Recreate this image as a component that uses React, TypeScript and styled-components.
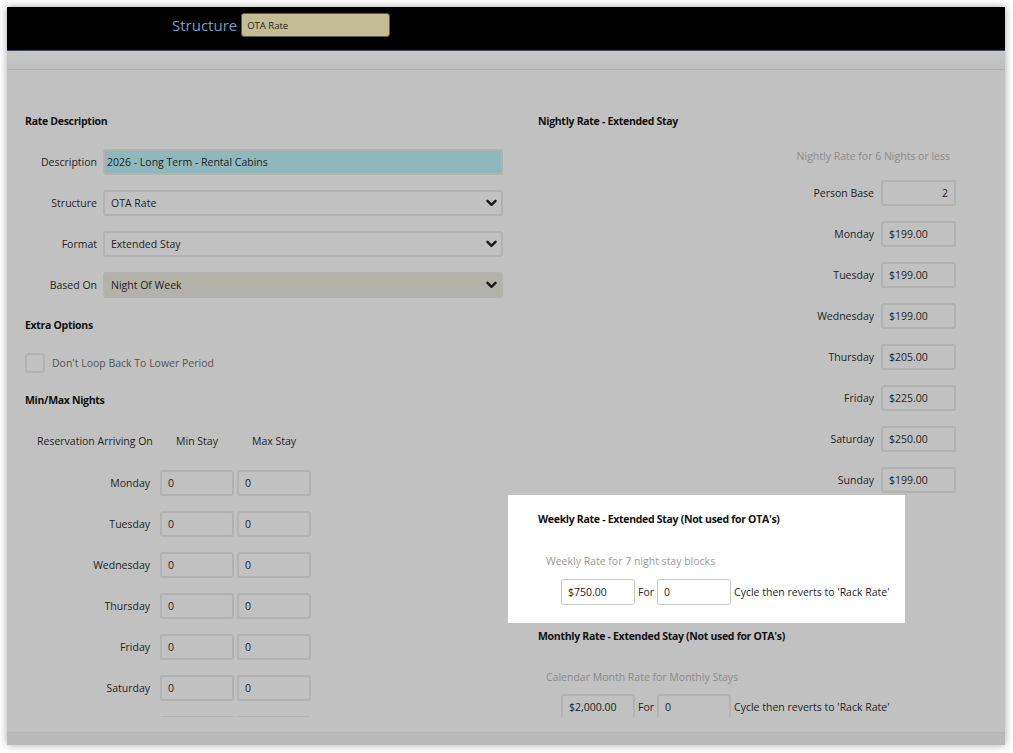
import React from 'react';
import styled, {createGlobalStyle} from 'styled-components';

const GlobalStyle = createGlobalStyle`
    html, body {
        margin: 0;
        padding: 0;
        background: #fff;
    }
    body {
        font-family: 'Open Sans', 'Liberation Sans', sans-serif;
        font-size: 10.5px;
        color: #1f1f1f;
    }
`;

const Page = styled.div`
    padding: 7px 8px 8px 7px;
`;

const Frame = styled.div`
    width: 998px;
    height: 738px;
    display: flex;
    flex-direction: column;
    background: #c1c1c1;
    box-shadow: 0 0 8px rgba(0, 0, 0, 0.35);
    overflow: hidden;
`;

const Header = styled.header`
    height: 44px;
    flex: none;
    box-sizing: border-box;
    display: flex;
    align-items: center;
    gap: 4px;
    padding: 0 0 7px 165px;
    background: #000;
    border-bottom: 1px solid #3c4d60;
`;

const HeaderLabel = styled.span`
    font-size: 15px;
    color: #7b9bc2;
`;

const HeaderInput = styled.div`
    width: 149px;
    height: 24px;
    box-sizing: border-box;
    display: flex;
    align-items: center;
    padding-left: 5px;
    font-size: 9.5px;
    color: #222;
    background: #c4bc92;
    border: 1px solid #5d5a45;
    border-radius: 3px;
`;

const SubBar = styled.div`
    height: 18px;
    flex: none;
    background: linear-gradient(#c6c6c6, #bfbfbf);
    border-bottom: 1px solid #b2b2b2;
`;

const Scroller = styled.div`
    flex: 1;
    overflow: hidden;
    margin-bottom: 15px;
`;

const Footer = styled.div`
    height: 12px;
    flex: none;
    background: #b9b9b9;
    border-top: 1px solid #b4b4b4;
`;

const Body = styled.div`
    display: grid;
    grid-template-columns: 478px 418px;
    column-gap: 35px;
    align-items: start;
    padding: 44px 0 0 18px;
`;

const Column = styled.div`
    display: flex;
    flex-direction: column;
`;

const SectionTitle = styled.div<{$top?: number}>`
    font-weight: 700;
    line-height: 14px;
    margin-top: ${p => p.$top ?? 0}px;
    color: #111;
    letter-spacing: -0.3px;
`;

const FieldList = styled.div<{$top?: number}>`
    display: flex;
    flex-direction: column;
    gap: 15px;
    margin-top: ${p => p.$top ?? 0}px;
`;

const FieldRow = styled.div`
    display: grid;
    grid-template-columns: 72px 1fr;
    column-gap: 6px;
    align-items: center;
`;

const Label = styled.span`
    text-align: right;
    white-space: nowrap;
`;

const Box = styled.div<{$bg?: string; $pad?: number}>`
    height: 26px;
    box-sizing: border-box;
    display: flex;
    align-items: center;
    justify-content: space-between;
    padding: 0 4px 0 ${p => p.$pad ?? 6}px;
    background: ${p => p.$bg ?? 'transparent'};
    border: 2px solid #b2b2b2;
    border-radius: 3px;
`;

const Chevron = () => (
    <svg width="11" height="8" viewBox="0 0 11 8">
        <path d="M1.5 1.8 L5.5 5.8 L9.5 1.8" fill="none" stroke="#1a1a1a" strokeWidth="2.4" strokeLinecap="round" strokeLinejoin="round" />
    </svg>
);

const CheckRow = styled.div`
    display: flex;
    align-items: center;
    gap: 7px;
    margin-top: 21px;
    color: #555;
`;

const CheckBox = styled.div`
    width: 20px;
    height: 20px;
    box-sizing: border-box;
    border: 2px solid #b2b2b2;
    border-radius: 3px;
`;

const DayGrid = styled.div`
    display: grid;
    grid-template-columns: 120px 74px 74px;
    column-gap: 3px;
    row-gap: 15px;
    padding-left: 12px;
    align-items: center;
    margin-top: 27px;
`;

const DayHead = styled.span<{$center?: boolean}>`
    line-height: 14px;
    text-align: ${p => (p.$center ? 'center' : 'left')};
    margin-bottom: 7px;
    white-space: nowrap;
`;

const DayLabel = styled.span`
    text-align: right;
    padding-right: 7px;
`;

const Input = styled.div<{$right?: boolean; $lit?: boolean; $w?: number}>`
    width: ${p => p.$w ?? 74}px;
    height: 26px;
    box-sizing: border-box;
    display: flex;
    align-items: center;
    justify-content: ${p => (p.$right ? 'flex-end' : 'flex-start')};
    padding: 0 6px;
    background: ${p => (p.$lit ? '#fff' : 'transparent')};
    border: ${p => (p.$lit ? '1px solid #c9c9c9' : '2px solid #b2b2b2')};
    border-radius: 3px;
    color: #1f1f1f;
`;

const Hint = styled.div<{$top: number; $right?: boolean; $lit?: boolean}>`
    line-height: 14px;
    margin-top: ${p => p.$top}px;
    text-align: ${p => (p.$right ? 'right' : 'left')};
    padding: ${p => (p.$right ? '0 6px 0 0' : '0 0 0 8px')};
    color: ${p => (p.$lit ? '#9b9b9b' : '#8c8c8c')};
`;

const RateList = styled.div`
    display: flex;
    flex-direction: column;
    gap: 15px;
    margin-top: 17px;
`;

const RateRow = styled.div`
    display: flex;
    justify-content: flex-end;
    align-items: center;
    gap: 7px;
`;

const Spotlight = styled.div`
    width: 397px;
    box-sizing: border-box;
    margin: 2px 0 0 -30px;
    padding: 17px 0 18px 30px;
    background: #fff;
`;

const CycleRow = styled.div<{$top: number}>`
    display: flex;
    align-items: center;
    gap: 3px;
    padding-left: 23px;
    margin-top: ${p => p.$top}px;
    white-space: nowrap;
`;

const CycleText = styled.span`
    color: #1f1f1f;
`;

const days = ['Monday', 'Tuesday', 'Wednesday', 'Thursday', 'Friday', 'Saturday', 'Sunday'];

const nightly: [string, string][] = [
    ['Monday', '$199.00'],
    ['Tuesday', '$199.00'],
    ['Wednesday', '$199.00'],
    ['Thursday', '$205.00'],
    ['Friday', '$225.00'],
    ['Saturday', '$250.00'],
    ['Sunday', '$199.00'],
];

const Cycle: React.FC<{amount: string; lit?: boolean; top: number}> = ({amount, lit, top}) => (
    <CycleRow $top={top}>
        <Input $lit={lit}>{amount}</Input>
        <CycleText>For</CycleText>
        <Input $lit={lit}>0</Input>
        <CycleText>Cycle then reverts to 'Rack Rate'</CycleText>
    </CycleRow>
);

export default function App() {
    return (
        <>
            <GlobalStyle />
            <Page>
                <Frame>
                    <Header>
                        <HeaderLabel>Structure</HeaderLabel>
                        <HeaderInput>OTA Rate</HeaderInput>
                    </Header>
                    <SubBar />
                    <Scroller>
                        <Body>
                            <Column>
                                <SectionTitle>Rate Description</SectionTitle>
                                <FieldList $top={21}>
                                    <FieldRow>
                                        <Label>Description</Label>
                                        <Box $bg="#8fb8bd" $pad={2}>
                                            2026 - Long Term - Rental Cabins
                                        </Box>
                                    </FieldRow>
                                    <FieldRow>
                                        <Label>Structure</Label>
                                        <Box>
                                            OTA Rate
                                            <Chevron />
                                        </Box>
                                    </FieldRow>
                                    <FieldRow>
                                        <Label>Format</Label>
                                        <Box>
                                            Extended Stay
                                            <Chevron />
                                        </Box>
                                    </FieldRow>
                                    <FieldRow>
                                        <Label>Based On</Label>
                                        <Box $bg="#b3b2a8">
                                            Night Of Week
                                            <Chevron />
                                        </Box>
                                    </FieldRow>
                                </FieldList>

                                <SectionTitle $top={20}>Extra Options</SectionTitle>
                                <CheckRow>
                                    <CheckBox />
                                    Don't Loop Back To Lower Period
                                </CheckRow>

                                <SectionTitle $top={20}>Min/Max Nights</SectionTitle>
                                <DayGrid>
                                    <DayHead>Reservation Arriving On</DayHead>
                                    <DayHead $center>Min Stay</DayHead>
                                    <DayHead $center>Max Stay</DayHead>
                                    {days.map(d => (
                                        <React.Fragment key={d}>
                                            <DayLabel>{d}</DayLabel>
                                            <Input>0</Input>
                                            <Input>0</Input>
                                        </React.Fragment>
                                    ))}
                                </DayGrid>
                            </Column>

                            <Column>
                                <SectionTitle>Nightly Rate - Extended Stay</SectionTitle>
                                <Hint $top={21} $right>
                                    Nightly Rate for 6 Nights or less
                                </Hint>
                                <RateList>
                                    <RateRow>
                                        <Label>Person Base</Label>
                                        <Input $right $w={75}>
                                            2
                                        </Input>
                                    </RateRow>
                                    {nightly.map(([d, v]) => (
                                        <RateRow key={d}>
                                            <Label>{d}</Label>
                                            <Input $w={75}>{v}</Input>
                                        </RateRow>
                                    ))}
                                </RateList>

                                <Spotlight>
                                    <SectionTitle>Weekly Rate - Extended Stay (Not used for OTA's)</SectionTitle>
                                    <Hint $top={28} $lit>
                                        Weekly Rate for 7 night stay blocks
                                    </Hint>
                                    <Cycle amount="$750.00" lit top={11} />
                                </Spotlight>

                                <SectionTitle $top={6}>Monthly Rate - Extended Stay (Not used for OTA's)</SectionTitle>
                                <Hint $top={27}>Calendar Month Rate for Monthly Stays</Hint>
                                <Cycle amount="$2,000.00" top={10} />
                            </Column>
                        </Body>
                    </Scroller>
                    <Footer />
                </Frame>
            </Page>
        </>
    );
}
